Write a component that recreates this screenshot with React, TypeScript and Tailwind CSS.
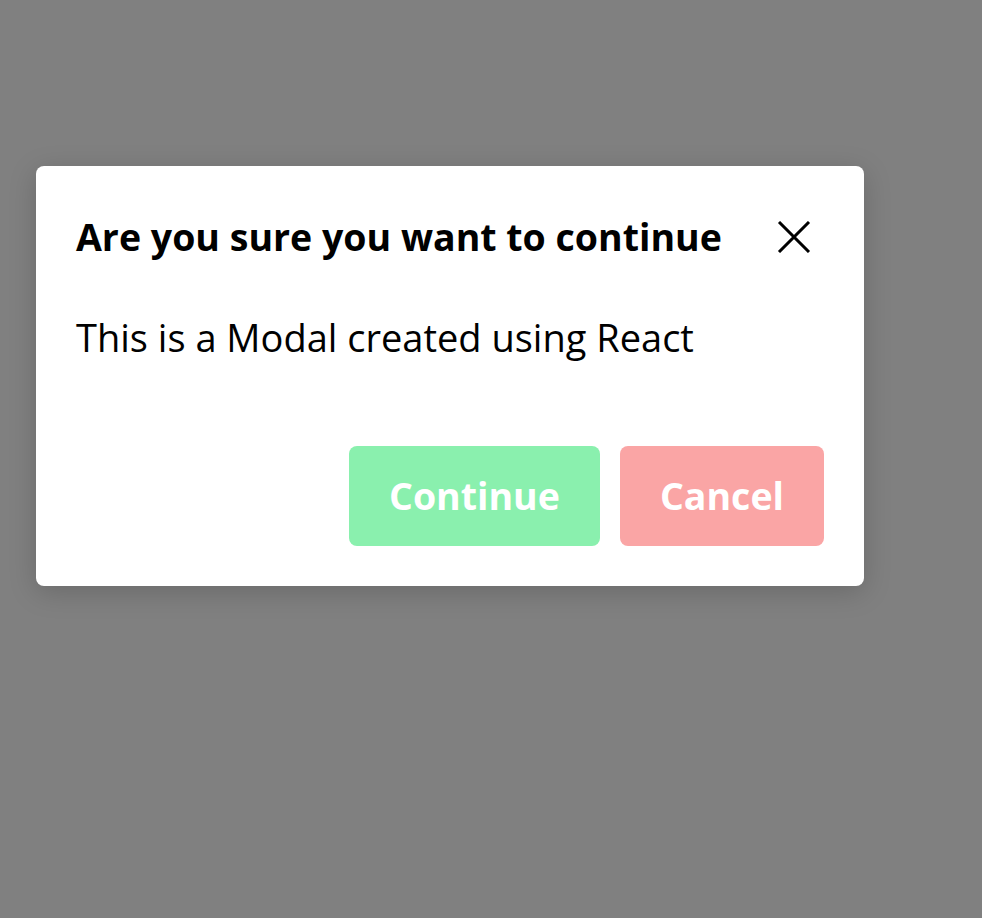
import React from "react";

export default function App() {
  return (
    <div
      className="min-h-screen w-full bg-[#808080] pt-[166px] pl-[36px]"
      style={{ fontFamily: '"Open Sans", "Noto Sans", sans-serif' }}
    >
      <div className="flex h-[420px] w-[828px] flex-col rounded-lg bg-white px-10 pt-[36px] pb-10 shadow-[0_6px_28px_rgba(0,0,0,0.18)]">
        <div className="flex h-[70px] items-center justify-between pr-[13px]">
          <h1 className="text-[37.5px] font-bold leading-none text-black">
            Are you sure you want to continue
          </h1>
          <svg width="34" height="32" viewBox="0 0 34 32" aria-label="close">
            <path d="M2 1 L32 31 M32 1 L2 31" stroke="black" strokeWidth="3" fill="none" />
          </svg>
        </div>
        <p className="mt-[46px] text-[38px] leading-none text-black">
          This is a Modal created using React
        </p>
        <div className="mt-auto flex justify-end gap-5">
          <button className="h-[100px] rounded-lg bg-[#8af0ae] px-10 text-[37.5px] font-bold text-white">
            Continue
          </button>
          <button className="h-[100px] rounded-lg bg-[#faa5a5] px-10 text-[37.5px] font-bold text-white">
            Cancel
          </button>
        </div>
      </div>
    </div>
  );
}
